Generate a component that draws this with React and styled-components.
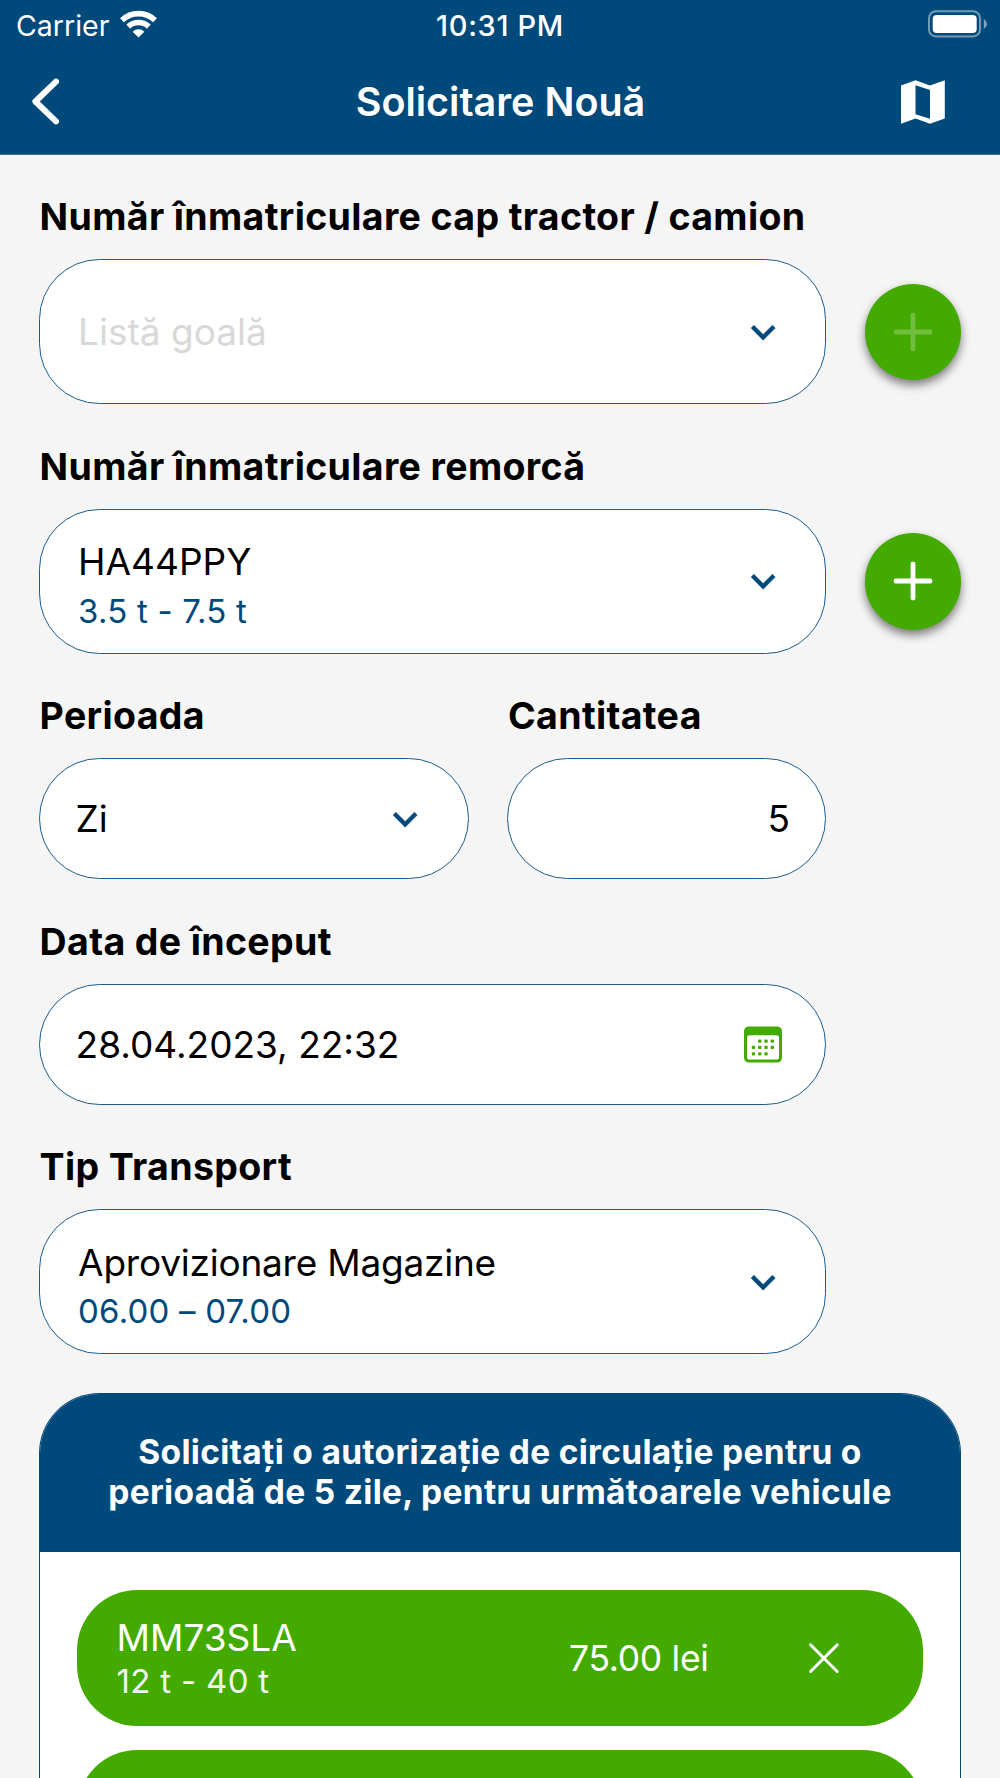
import React from "react";
import styled, { createGlobalStyle } from "styled-components";

const BLUE = "#00497b";
const GREEN = "#43aa00";

const GlobalStyle = createGlobalStyle`
  * {
    box-sizing: border-box;
  }
  body {
    margin: 0;
    background: #f5f5f5;
    font-family: Inter, "Liberation Sans", sans-serif;
    color: #000;
  }
  button {
    font: inherit;
    color: inherit;
    border: none;
    background: none;
    padding: 0;
  }
  svg {
    display: block;
    flex: none;
  }
`;

const Screen = styled.div`
  width: 1000px;
  height: 1778px;
  overflow: hidden;
  background: #f5f5f5;
`;

/* header */
const Header = styled.header`
  height: 155px;
  background: ${BLUE};
  border-bottom: 1px solid #3d749c;
  color: #fff;
`;

const StatusBar = styled.div`
  display: grid;
  grid-template-columns: 1fr auto 1fr;
  align-items: center;
  height: 48px;
  padding: 0 13px 0 16px;
`;

const Carrier = styled.div`
  display: flex;
  align-items: center;
  gap: 10.5px;
  font-size: 28.5px;
  line-height: 34px;

  span {
    padding-top: 3px;
  }
`;

const Time = styled.div`
  padding-top: 3px;
  margin-right: 3px;
  font-size: 29px;
  font-weight: 500;
  letter-spacing: 0.65px;
  line-height: 34px;
`;

const Battery = styled.div`
  justify-self: end;
`;

const NavBar = styled.nav`
  display: grid;
  grid-template-columns: 1fr auto 1fr;
  align-items: center;
  height: 106px;
  padding: 0 55px 0 32px;
`;

const Title = styled.h1`
  margin: 2px 0 0 24px;
  font-size: 39.5px;
  font-weight: 600;
  line-height: 48px;
`;

const NavButton = styled.button`
  justify-self: ${(props) => props.$side || "start"};
`;

/* form */
const Form = styled.main`
  display: flex;
  flex-direction: column;
  gap: 38.7px;
  padding: 38.3px 38.6px 0;
`;

const Row = styled.div`
  display: flex;
  align-items: flex-end;
  gap: ${(props) => props.$gap || 38.6}px;
`;

const Field = styled.div`
  width: ${(props) => props.$width || 787.4}px;
`;

const Label = styled.div`
  margin-bottom: 18px;
  padding-left: 1px;
  font-size: 37.5px;
  font-weight: 700;
  letter-spacing: 0.35px;
  line-height: 48px;
  white-space: nowrap;
`;

const Box = styled.div`
  display: flex;
  align-items: center;
  justify-content: ${(props) => (props.$end ? "flex-end" : "space-between")};
  height: ${(props) => (props.$tall ? 144.9 : 120.8)}px;
  padding: 0 ${(props) => props.$right || 38}px 0
    ${(props) => (props.$tall ? 38.5 : 36)}px;
  background: #fff;
  border: 1px solid #1b5e8e;
  border-radius: 60.4px;
`;

const Value = styled.div`
  padding-top: 1px;
  font-size: 37px;
  line-height: 46px;
  letter-spacing: ${(props) => props.$spacing || 0}px;
  color: ${(props) => (props.$empty ? "#d8d8d8" : "#000")};
`;

const TwoLines = styled.div`
  padding-top: 6px;
`;

const SubValue = styled.div`
  margin-top: 5.5px;
  font-size: 33px;
  line-height: 40px;
  letter-spacing: 0.2px;
  color: ${BLUE};
`;

const AddButton = styled.button`
  display: flex;
  align-items: center;
  justify-content: center;
  width: 96.6px;
  height: 96.6px;
  margin-bottom: 24.1px;
  border-radius: 50%;
  background: ${GREEN};
  box-shadow: 0 5px 10px rgba(0, 0, 0, 0.5);

  svg {
    opacity: ${(props) => (props.disabled ? 0.25 : 1)};
  }
`;

/* request summary */
const Panel = styled.section`
  border: 1px solid ${BLUE};
  border-bottom: none;
  border-radius: 60.4px 60.4px 0 0;
  background: #fff;
  overflow: hidden;
`;

const PanelTitle = styled.h2`
  margin: 0;
  height: 157.6px;
  padding-top: 38px;
  background: ${BLUE};
  color: #fff;
  text-align: center;
  font-size: 33.5px;
  font-weight: 700;
  letter-spacing: 0.31px;
  line-height: 40.4px;
`;

const VehicleList = styled.div`
  display: flex;
  flex-direction: column;
  gap: 23.8px;
  padding: 38.4px 37.8px;
`;

const Vehicle = styled.div`
  display: flex;
  align-items: center;
  height: 136.2px;
  padding: 0 75px 0 39.2px;
  border-radius: 60.4px;
  background: ${GREEN};
  color: #fff;
`;

const VehicleInfo = styled.div`
  flex: 1;
`;

const Plate = styled.div`
  font-size: 37px;
  line-height: 46px;
`;

const Weight = styled.div`
  margin-top: 0.7px;
  font-size: 33px;
  line-height: 40px;
  letter-spacing: 0.3px;
  color: #f2f2f2;
`;

const Price = styled.div`
  padding-top: 2px;
  margin-right: 91px;
  font-size: 35.5px;
  letter-spacing: -0.3px;
  line-height: 44px;
`;

const WifiIcon = () => (
  <svg width="37" height="28" viewBox="0 0 37 28" fill="none" stroke="#fff">
    <path d="M2 10.2 A24 24 0 0 1 35 10.2" strokeWidth="5.6" />
    <path d="M8.2 16.6 A15.1 15.1 0 0 1 28.8 16.6" strokeWidth="5.6" />
    <path
      d="M18.5 27.4 L12.7 21.7 A8.2 8.2 0 0 1 24.3 21.7 Z"
      fill="#fff"
      stroke="none"
    />
  </svg>
);

const BatteryIcon = () => (
  <svg width="59" height="28" viewBox="0 0 59 28" fill="#fff">
    <rect
      x="1"
      y="1.2"
      width="51"
      height="25.2"
      rx="7"
      fill="none"
      stroke="#fff"
      strokeOpacity="0.45"
      strokeWidth="2"
    />
    <rect x="4.7" y="5" width="44" height="17.9" rx="4" />
    <path d="M55.8 9 Q59 11 59 13.9 Q59 16.8 55.8 18.8 Z" fillOpacity="0.5" />
  </svg>
);

const BackIcon = () => (
  <svg width="28" height="47" viewBox="0 0 28 47" fill="none">
    <path
      d="M24 3.7 L3.4 23.5 L24 43.3"
      stroke="#fff"
      strokeWidth="6"
      strokeLinecap="round"
      strokeLinejoin="round"
    />
  </svg>
);

const MapIcon = () => (
  <svg width="44" height="45" viewBox="0 0 44 45" fill="#fff">
    <path
      fillRule="evenodd"
      d="M0 6.4 L14.5 1.2 L29 6.4 L43.8 1.2 V39.5 L29 44.7 L14.5 39.5 L0 44.7 Z M14.5 6.2 V35.2 L29 39.8 V11.1 Z"
    />
  </svg>
);

const ChevronIcon = () => (
  <svg width="48.3" height="48.3" viewBox="0 0 24 24" fill={BLUE}>
    <path
      d="M7.41 8.59L12 13.17l4.59-4.58L18 10l-6 6-6-6 1.41-1.41z"
      stroke={BLUE}
      strokeWidth="0.25"
      strokeLinejoin="round"
    />
  </svg>
);

const PlusIcon = () => (
  <svg width="40" height="40" viewBox="0 0 40 40" fill="#fff">
    <rect x="0.8" y="17.6" width="38.4" height="4.8" rx="1.6" />
    <rect x="17.6" y="0.8" width="4.8" height="38.4" rx="1.6" />
  </svg>
);

const dots = [
  [1, 0], [2, 0], [3, 0],
  [0, 1], [1, 1], [2, 1], [3, 1],
  [0, 2], [1, 2], [2, 2],
];

const CalendarIcon = () => (
  <svg width="38" height="37" viewBox="0 0 38 37" fill={GREEN}>
    <path
      fillRule="evenodd"
      d="M5 0.4 H33 A5 5 0 0 1 38 5.4 V31.6 A5 5 0 0 1 33 36.6 H5 A5 5 0 0 1 0 31.6 V5.4 A5 5 0 0 1 5 0.4 Z M5.6 9.2 A2.6 2.6 0 0 0 3 11.8 V31 A2.6 2.6 0 0 0 5.6 33.6 H32.4 A2.6 2.6 0 0 0 35 31 V11.8 A2.6 2.6 0 0 0 32.4 9.2 Z"
    />
    {dots.map(([col, row]) => (
      <rect
        key={`${col}-${row}`}
        x={7.8 + col * 6.3}
        y={13.4 + row * 6.4}
        width="3.3"
        height="3.3"
        rx="0.8"
      />
    ))}
  </svg>
);

const CloseIcon = () => (
  <svg width="48" height="48" viewBox="0 0 48 48" fill="none">
    <path
      d="M10.6 10.9 L37.2 37.5 M37.2 10.9 L10.6 37.5"
      stroke="#fff"
      strokeWidth="2.9"
      strokeLinecap="round"
    />
  </svg>
);

const vehicles = [
  { plate: "MM73SLA", weight: "12 t - 40 t", price: "75.00 lei" },
  { plate: "", weight: "", price: "" },
];

const App = () => {
  return (
    <Screen>
      <GlobalStyle />
      <Header>
        <StatusBar>
          <Carrier>
            <span>Carrier</span>
            <WifiIcon />
          </Carrier>
          <Time>10:31 PM</Time>
          <Battery>
            <BatteryIcon />
          </Battery>
        </StatusBar>
        <NavBar>
          <NavButton aria-label="Înapoi">
            <BackIcon />
          </NavButton>
          <Title>Solicitare Nouă</Title>
          <NavButton $side="end" aria-label="Hartă">
            <MapIcon />
          </NavButton>
        </NavBar>
      </Header>

      <Form>
        <Row>
          <Field>
            <Label>Număr înmatriculare cap tractor / camion</Label>
            <Box $tall>
              <Value $empty>Listă goală</Value>
              <ChevronIcon />
            </Box>
          </Field>
          <AddButton disabled aria-label="Adaugă">
            <PlusIcon />
          </AddButton>
        </Row>

        <Row>
          <Field>
            <Label>Număr înmatriculare remorcă</Label>
            <Box $tall>
              <TwoLines>
                <Value>HA44PPY</Value>
                <SubValue>3.5 t - 7.5 t</SubValue>
              </TwoLines>
              <ChevronIcon />
            </Box>
          </Field>
          <AddButton aria-label="Adaugă">
            <PlusIcon />
          </AddButton>
        </Row>

        <Row $gap={38.4}>
          <Field $width={430}>
            <Label>Perioada</Label>
            <Box>
              <Value>Zi</Value>
              <ChevronIcon />
            </Box>
          </Field>
          <Field $width={319}>
            <Label>Cantitatea</Label>
            <Box $end $right={35}>
              <Value>5</Value>
            </Box>
          </Field>
        </Row>

        <Field>
          <Label>Data de început</Label>
          <Box $right={43}>
            <Value>28.04.2023, 22:32</Value>
            <CalendarIcon />
          </Box>
        </Field>

        <Field>
          <Label>Tip Transport</Label>
          <Box $tall>
            <TwoLines>
              <Value $spacing={-0.22}>Aprovizionare Magazine</Value>
              <SubValue>06.00 – 07.00</SubValue>
            </TwoLines>
            <ChevronIcon />
          </Box>
        </Field>

        <Panel>
          <PanelTitle>
            Solicitați o autorizație de circulație pentru o
            <br />
            perioadă de 5 zile, pentru următoarele vehicule
          </PanelTitle>
          <VehicleList>
            {vehicles.map((v, idx) => (
              <Vehicle key={idx}>
                <VehicleInfo>
                  <Plate>{v.plate}</Plate>
                  <Weight>{v.weight}</Weight>
                </VehicleInfo>
                <Price>{v.price}</Price>
                <CloseIcon />
              </Vehicle>
            ))}
          </VehicleList>
        </Panel>
      </Form>
    </Screen>
  );
};

export default App;
